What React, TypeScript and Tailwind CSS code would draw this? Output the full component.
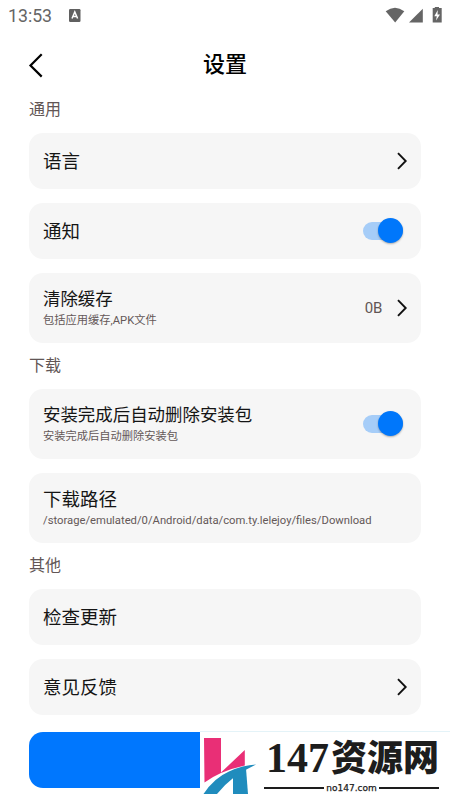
import type { ReactNode } from "react";

function Chevron() {
  return (
    <svg width="12" height="20" viewBox="0 0 12 20" fill="none" className="shrink-0">
      <path d="M2 2.2L9.7 10L2 17.8" stroke="#111" strokeWidth="1.9" />
    </svg>
  );
}

function Toggle() {
  return (
    <div className="mb-px mr-[5px] flex h-[18px] w-[40px] items-center justify-end rounded-full bg-[#a6cdf8]">
      <div className="h-[25px] w-[25px] shrink-0 rounded-full bg-[#0077fb] shadow-[0_1px_2px_rgba(0,0,0,0.3)]" />
    </div>
  );
}

function SectionTitle({ children }: { children: ReactNode }) {
  return <h2 className="text-[16px] leading-[20px] text-[#625655]">{children}</h2>;
}

type RowProps = {
  title: string;
  note?: string;
  compact?: boolean;
  children?: ReactNode;
};

function Row({ title, note, compact, children }: RowProps) {
  return (
    <div
      className={`flex items-center justify-between rounded-[14px] bg-[#f6f6f6] pl-[14px] pr-[13px] ${
        note ? "h-[70px]" : "h-[56px]"
      }`}
    >
      <div className="whitespace-nowrap pt-px">
        <div
          className={`text-[#151515] ${
            compact ? "pb-[2px] text-[17.45px] leading-[22px]" : "text-[18.5px] leading-[24px]"
          }`}
        >
          {title}
        </div>
        {note && <div className="text-[11.25px] leading-[18px] text-[#645858]">{note}</div>}
      </div>
      {children}
    </div>
  );
}

function StatusBar() {
  return (
    <div className="flex h-[32px] items-center pl-[8px] pr-[8px] text-[#656565]">
      <span className="font-[Roboto] text-[17.7px] leading-[20px]">13:53</span>
      <svg width="12" height="13" viewBox="0 0 12 13" className="mb-[2px] ml-[17px]">
        <rect width="11.5" height="13" rx="1.2" fill="#606060" />
        <path d="M3 9.5L5.8 3L8.6 9.5M4 7.5H7.6" stroke="#fff" strokeWidth="1.5" fill="none" />
      </svg>
      <svg width="57" height="18" viewBox="0 0 57 18" className="ml-auto" fill="#656565">
        <path d="M0.7 4.3Q10 -3 19.3 4.3L10.2 15.5Z" />
        <path d="M24 15.5L37.8 1.8V15.5Z" />
        <path d="M49.8 0H54V1H56.7V15.5H47.7V1H49.8Z" />
        <path d="M52.8 3.1L49.3 9.3H51.8L51 13.5L55 7.5H52.5Z" fill="#fff" />
      </svg>
    </div>
  );
}

function SiteBadge() {
  return (
    <div className="absolute bottom-0 left-[200px] flex h-[69px] w-[250px] border-t border-[#e4f3f8] bg-white">
      <svg width="62" height="68" viewBox="0 0 62 68" className="shrink-0">
        <path d="M4 6H21V40.5L44.8 18V33.5Q20 39 4.5 50.5Z" fill="#e92f76" />
        <path d="M3.5 62Q14 46 29 39.5Q43 33 56 32.5Q31 44 17 62Z" fill="#208cbd" />
        <path d="M33 44Q38 40 46 36.5L48 62H33Z" fill="#208cbd" />
      </svg>
      <div className="ml-[2px] w-[175px] text-[#1d1d1d]">
        <div className="flex h-[50px] whitespace-nowrap pl-[2px]">
          <span className="pt-px font-['Liberation_Serif'] text-[42px] font-bold leading-[50px]">147</span>
          <span className="ml-[2px] pt-[2px] text-[36px] font-black leading-[50px]">资源网</span>
        </div>
        <div className="flex h-[12px] items-center justify-between">
          <span className="h-[2px] w-[60px] bg-[#1d1d1d]" />
          <span className="font-['DejaVu_Sans'] text-[9px] leading-[12px] [-webkit-text-stroke:0.25px_#1d1d1d]">no147.com</span>
          <span className="h-[2px] w-[60px] bg-[#1d1d1d]" />
        </div>
      </div>
    </div>
  );
}

export default function App() {
  return (
    <div className="relative h-[800px] w-[450px] overflow-hidden bg-white font-[Roboto,'Noto_Sans_CJK_SC',sans-serif]">
      <StatusBar />
      <header className="grid h-[66px] grid-cols-[1fr_auto_1fr] items-center px-[28px]">
        <svg width="16" height="26" viewBox="0 0 16 26" fill="none">
          <path d="M13.7 2.2L2.5 13.5L13.7 24.6" stroke="#000" strokeWidth="2.2" />
        </svg>
        <h1 className="text-[22px] font-medium leading-[30px] text-black">设置</h1>
      </header>

      <main className="flex flex-col px-[29px] pt-[2px]">
        <SectionTitle>通用</SectionTitle>
        <div className="mt-[13px] flex flex-col gap-[14px]">
          <Row title="语言">
            <Chevron />
          </Row>
          <Row title="通知">
            <Toggle />
          </Row>
          <Row title="清除缓存" note="包括应用缓存,APK文件" compact>
            <div className="flex items-center gap-[14px]">
              <span className="text-[15px] tracking-[-0.3px] text-[#625655]">0B</span>
              <Chevron />
            </div>
          </Row>
        </div>

        <div className="mt-[13px]">
          <SectionTitle>下载</SectionTitle>
        </div>
        <div className="mt-[13px] flex flex-col gap-[14px]">
          <Row title="安装完成后自动删除安装包" note="安装完成后自动删除安装包" compact>
            <Toggle />
          </Row>
          <Row title="下载路径" note="/storage/emulated/0/Android/data/com.ty.lelejoy/files/Download" />
        </div>

        <div className="mt-[13px]">
          <SectionTitle>其他</SectionTitle>
        </div>
        <div className="mt-[13px] flex flex-col gap-[14px]">
          <Row title="检查更新" />
          <Row title="意见反馈">
            <Chevron />
          </Row>
        </div>

        <button className="mt-[17px] h-[56px] rounded-[14px] bg-[#0077fe]" />
      </main>

      <SiteBadge />
    </div>
  );
}
